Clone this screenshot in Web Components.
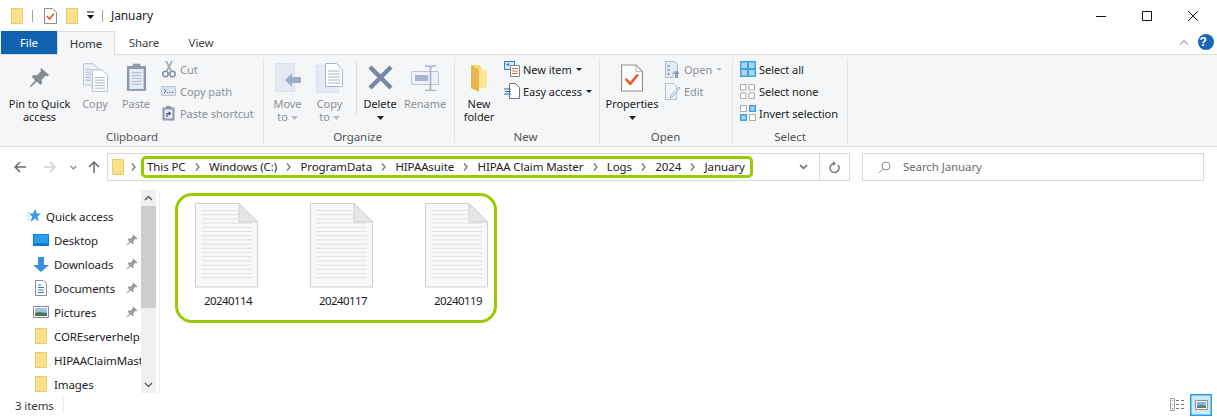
<!DOCTYPE html>
<html lang="en">
<head>
<meta charset="UTF-8">
<title>January</title>
<style>
  html, body { margin: 0; padding: 0; background: #fff; }
  body { width: 1217px; height: 417px; overflow: hidden; font: 11.5px "Noto Sans", "Liberation Sans", sans-serif; letter-spacing: -0.1px; color: #1e1e1e; }
  explorer-window { width: 1217px; height: 417px; }
</style>
</head>
<body>

<explorer-window>
  <title-bar slot="top" heading="January"></title-bar>
  <ribbon-tabs slot="top"></ribbon-tabs>
  <ribbon-bar slot="top">
    <ribbon-group label="Clipboard" width="263">
      <big-button width="71" icon="pin" text="Pin to Quick|access"></big-button>
      <big-button width="40" icon="copy" text="Copy" off></big-button>
      <big-button width="42" icon="paste" text="Paste" off></big-button>
      <small-column>
        <small-button icon="cut" off>Cut</small-button>
        <small-button icon="path" off>Copy path</small-button>
        <small-button icon="shortcut" off>Paste shortcut</small-button>
      </small-column>
    </ribbon-group>
    <ribbon-group label="Organize" width="191" nudge="4">
      <big-button width="41" icon="move" text="Move|to" caret="inline" off></big-button>
      <big-button width="43" icon="copyto" text="Copy|to" caret="inline" off></big-button>
      <ribbon-rule></ribbon-rule>
      <big-button width="44" icon="delete" text="Delete" caret="below"></big-button>
      <big-button width="46" icon="rename" text="Rename" off></big-button>
    </ribbon-group>
    <ribbon-group label="New" width="145" nudge="4">
      <big-button width="42" icon="newfolder" text="New|folder"></big-button>
      <small-column>
        <small-button icon="newitem" caret>New item</small-button>
        <small-button icon="easy" caret>Easy access</small-button>
      </small-column>
    </ribbon-group>
    <ribbon-group label="Open" width="133" nudge="2">
      <big-button width="58" icon="props" text="Properties" caret="below"></big-button>
      <small-column>
        <small-button icon="open" caret off>Open</small-button>
        <small-button icon="edit" off>Edit</small-button>
      </small-column>
    </ribbon-group>
    <ribbon-group label="Select" width="115">
      <small-column>
        <small-button icon="all">Select all</small-button>
        <small-button icon="none">Select none</small-button>
        <small-button icon="invert">Invert selection</small-button>
      </small-column>
    </ribbon-group>
  </ribbon-bar>
  <address-row slot="top"></address-row>

  <nav-pane slot="nav">
    <nav-item icon="star" head>Quick access</nav-item>
    <nav-item icon="desktop" pinned>Desktop</nav-item>
    <nav-item icon="downloads" pinned>Downloads</nav-item>
    <nav-item icon="documents" pinned>Documents</nav-item>
    <nav-item icon="pictures" pinned>Pictures</nav-item>
    <nav-item icon="folder">COREserverhelp</nav-item>
    <nav-item icon="folder">HIPAAClaimMaster</nav-item>
    <nav-item icon="folder">Images</nav-item>
  </nav-pane>

  <file-list slot="main">
    <file-item>20240114</file-item>
    <file-item>20240117</file-item>
    <file-item>20240119</file-item>
  </file-list>

  <status-bar slot="bottom">3 items</status-bar>
</explorer-window>

<script>
// all the little pictures, keyed by name: viewbox w, h, body, then the drawn size if it differs
const FOLDER = '<path d="M.5.5h11v15H.5z" fill="#fde08c" stroke="#eccb6b"/><path d="M9 12.5h2.5v3H9z" fill="#fff2bd" stroke="#eccb6b"/>';
const ICONS = {
  folder: [12, 16, FOLDER],
  check: [13, 16, '<path d="M.5.5h8l4 4v11H.5z" fill="#fff" stroke="#8c8c8c"/><path d="M3 8l2.500 3L10 5.500" fill="none" stroke="#e8562a" stroke-width="1.600"/>'],
  pin: [24, 24, '<path d="M14 1l9 8-2 1.500-2-.5-4.500 4.500.5 4-2 2-4-4L2 23l-1-1 6-7-4-4 2-2 4 .5L13.500 5 13 3z" fill="#858c93"/>', 21, 21],
  copy: [28, 32, '<path d="M.5.500h11l5 5v19H.5z" fill="#edf1f7" stroke="#b3bccb"/><path d="M10.500 7.500h11l6 6v18h-17z" fill="#fff" stroke="#a9b4c6"/><path d="M13 16h12M13 19h12M13 22h12M13 25h12M13 28h12M3 7h6M3 10h6M3 13h6M3 16h6M3 19h6" stroke="#a3b2c9"/>', 25, 29],
  paste: [22, 30, '<path d="M1 3h20v26H1z" fill="#8c98ab"/><path d="M3.500 6h15v21h-15z" fill="#e6ecf6"/><path d="M6 10h10M6 13h10M6 16h10M6 19h10M6 22h10" stroke="#aab8ce"/><path d="M7 3V.500h8V3l2 1v2H5V4z" fill="#8d99ac"/>', 21, 29],
  cut: [14, 18, '<circle cx="3.500" cy="14" r="2.700" fill="none" stroke="#7e8ea5" stroke-width="1.500"/><circle cx="10.500" cy="14" r="2.700" fill="none" stroke="#7e8ea5" stroke-width="1.500"/><path d="M4.500 11.500L10 1M9.500 11.500L4 1" stroke="#a4adb9" stroke-width="1.700"/>'],
  path: [15, 10, '<path d="M.5.500h14v9H.5z" fill="#dbe3f0" stroke="#bcc7d9"/><path d="M3 3l2 2-2 2M6 6.500h1.200M8.500 6.500h1.200M11 6.500h1.200" fill="none" stroke="#5f6f86"/>'],
  shortcut: [13, 16, '<path d="M.5 2.500h12v13H.5z" fill="#8c98ab"/><path d="M2.500 4.500h8v9h-8z" fill="#e4ebf5"/><path d="M4 1h5v2H4z" fill="#8c98ab"/><path d="M5 12V8.500h3M6.500 7l2 1.500-2 1.500" fill="none" stroke="#4c5a70" stroke-width="1.200"/>'],
  move: [26, 29, '<path d="M0 0h20v29H0z" fill="#d8e2f1"/><path d="M1 1h18v27H1z" fill="#e3eaf5"/><path d="M10 17l7-7v4h9v6h-9v4z" fill="#9daec7"/>'],
  copyto: [28, 30, '<path d="M0 2h23v28H0z" fill="#d8e2f1"/><path d="M1 3h21v26H1z" fill="#e3eaf5"/><path d="M9.500.500h11l6 6v17h-17z" fill="#fff" stroke="#a9b4c6"/><path d="M12 8h12M12 11h12M12 14h12M12 17h12M12 20h12" stroke="#a3b2c9"/>'],
  delete: [27, 27, '<path d="M3 3l21 21M24 3L3 24" stroke="#7588a5" stroke-width="4.500"/>'],
  rename: [28, 26, '<path d="M.5 6.500h27v13H.5z" fill="#eef2f8" stroke="#bac6d8"/><path d="M4 10h13v6H4z" fill="#a6b5cd"/><path d="M14 1h4l1.500 1.500V24L18 25.500h-4M25 1h-4l-1.500 1.500M25 25.500h-4L19.500 24" fill="none" stroke="#a2b1c8" stroke-width="1.600"/>'],
  newfolder: [18, 28, '<path d="M1 1h9l7 16v6l-16 2z" fill="#fbd774"/><path d="M1 1l8 5v22l-8-4z" fill="#e8b84e"/><path d="M9 6h8v17H9z" fill="#ffe595"/>'],
  newitem: [16, 16, '<path d="M.5.500h10v8H.5z" fill="#dce7f5" stroke="#3a7ab8"/><path d="M2.500 2.500h3v2h-3z" fill="#3a7ab8"/><path d="M6.500 4.500h9v11h-9z" fill="#fff" stroke="#7b8794"/><path d="M8 7.500h6M8 10h6M8 12.500h6" stroke="#d9755d"/>'],
  easy: [16, 16, '<path d="M5.500.500h6l4 4v11h-10z" fill="#fff" stroke="#6d7680"/><path d="M0 6h7M1 8.500h6M0 11h7" stroke="#1f6fb8"/>'],
  props: [26, 32, '<path d="M.7.700h17l7.600 7.600v23H.7z" fill="#fff" stroke="#8e8e8e" stroke-width="1.300"/><path d="M17.500 1v7.500H25" fill="none" stroke="#a5a5a5"/><path d="M5.500 17l5.500 6 9-11" fill="none" stroke="#ec5a26" stroke-width="3"/>', 22, 28],
  open: [15, 17, '<path d="M.5.500h9l3 3V11H8v5.500H.5z" fill="#e4ebf5" stroke="#adb9cb"/><path d="M2.500 4h2v2h-2zM2.500 8h2v2h-2zM2.500 12h2v2h-2z" fill="#8d9cb3"/><path d="M8 13l3.500-3.500L15 13h-2v4h-3v-4z" fill="#8d9cb3"/>'],
  edit: [15, 17, '<path d="M.5.500h8l3 3v13H.5z" fill="#f0f4fa" stroke="#b6c1d2"/><path d="M14 4l1 1-7 8.500-3 1.500 1-3z" fill="#dfe7f2" stroke="#aebace"/>'],
  all: [16, 16, '<path d="M0 0h16v16H0z" fill="#3fa3e3"/><path d="M1.500 1.500h5.500v5.500H1.500zM9 1.500h5.500v5.500H9zM1.500 9h5.500v5.500H1.500zM9 9h5.500v5.500H9z" fill="#a9d6f3"/>'],
  none: [15, 15, '<path d="M.5.500h5.500v5.500H.5zM9 .5h5.500v5.500H9zM.5 9h5.500v5.500H.5zM9 9h5.500v5.500H9z" fill="#fff" stroke="#a9a9a9"/>'],
  invert: [16, 16, '<path d="M.5.500h6v6h-6zM9.500 9.500h6v6h-6z" fill="#fff" stroke="#a9a9a9"/><path d="M9 0h7v7H9zM0 9h7v7H0z" fill="#3fa3e3"/><path d="M10.500 1.500h4v4h-4zM1.500 10.500h4v4h-4z" fill="#a9d6f3"/>'],
  star: [14, 14, '<path d="M8.500 0l1.300 4.500H14l-3.500 3 1.300 5-3.800-3-4.500 3.500 1.700-5.500L2 4.800h3.500z" fill="#3a9be0"/><path d="M0 4h4M0 7h3M0 10h3" stroke="#a8d4f2"/>'],
  desktop: [16, 12, '<path d="M0 0h16v12H0z" fill="#0f7fd8"/><path d="M1 1h14v9H1z" fill="#2a9df0"/><path d="M2 10h12" stroke="#0b63aa"/>'],
  downloads: [16, 15, '<path d="M5 0h6v8h5l-8 7-8-7h5z" fill="#3a8ee0"/>'],
  documents: [12, 16, '<path d="M.5.500h8l3 3v12H.5z" fill="#fff" stroke="#8a8f96"/><path d="M3 5h3M3 7.500h6M3 10h6M3 12.500h6" stroke="#3a78b5"/>'],
  pictures: [16, 12, '<path d="M.5.500h15v11H.5z" fill="#fff" stroke="#8b8b8b"/><path d="M2 2h12v5H2z" fill="#9cc4e8"/><path d="M2 7l4-1 8 1v3H2z" fill="#50764f"/>']
};
function svgIcon(name) {
  const [w, h, body, dw, dh] = ICONS[name];
  return `<svg width="${dw || w}" height="${dh || h}" viewBox="0 0 ${w} ${h}" style="display:block;flex:none">${body}</svg>`;
}
const PIN_SMALL = '<svg width="12" height="12" viewBox="0 0 24 24" style="display:block"><path d="M14 1l9 8-2 1.500-2-.5-4.500 4.500.5 4-2 2-4-4L2 23l-1-1 6-7-4-4 2-2 4 .5L13.500 5 13 3z" fill="#9a9a9a"/></svg>';

class ExplorerWindow extends HTMLElement {
  constructor() {
    super();
    this.attachShadow({ mode: 'open' }).innerHTML = `
      <style>
        :host { display: flex; flex-direction: column; }
        .body { flex: 1; display: flex; min-height: 0; }
      </style>
      <slot name="top"></slot>
      <div class="body"><slot name="nav"></slot><slot name="main"></slot></div>
      <slot name="bottom"></slot>`;
  }
}

class TitleBar extends HTMLElement {
  connectedCallback() {
    this.attachShadow({ mode: 'open' }).innerHTML = `
      <style>
        :host { display: flex; align-items: center; height: 31px; padding-left: 11px; box-sizing: border-box; flex: none; }
        .rule { width: 1px; height: 12px; background: #a0a0a0; }
        .caret { width: 7px; height: 9px; }
        .name { margin-left: 8px; font-size: 12px; color: #222; flex: 1; }
        .ctl { display: flex; padding-right: 1px; }
        .ctl div { width: 46px; height: 31px; display: flex; align-items: center; justify-content: center; }
      </style>
      ${svgIcon('folder')}
      <div class="rule" style="margin-left:9px"></div>
      <div style="margin-left:11px">${svgIcon('check')}</div>
      <div style="margin-left:9px">${svgIcon('folder')}</div>
      <svg class="caret" style="margin-left:9px" viewBox="0 0 7 9"><path d="M0 1h7" stroke="#111"/><path d="M0 4h7L3.500 8z" fill="#111"/></svg>
      <div class="rule" style="margin-left:8px"></div>
      <div class="name">${this.getAttribute('heading')}</div>
      <div class="ctl">
        <div><svg width="10" height="10"><path d="M0 5.500h10" stroke="#111"/></svg></div>
        <div><svg width="10" height="10"><path d="M.5.500h9v9h-9z" fill="none" stroke="#111"/></svg></div>
        <div><svg width="10" height="10"><path d="M0 0l10 10M10 0L0 10" stroke="#111"/></svg></div>
      </div>`;
  }
}

class RibbonTabs extends HTMLElement {
  constructor() {
    super();
    this.attachShadow({ mode: 'open' }).innerHTML = `
      <style>
        :host { display: flex; height: 24px; flex: none; padding-left: 1px; box-sizing: border-box; position: relative; border-bottom: 1px solid #dadbdc; font-size: 11.5px; }
        div { display: flex; align-items: center; justify-content: center; box-sizing: border-box; height: 23px; padding-bottom: 1px; }
        .file { width: 56px; background: #0f62ae; color: #fff; }
        .home { width: 58px; height: 24px; border: 1px solid #dadbdc; border-bottom: 0; background: #f5f6f7; color: #333; }
        .tab { width: 58px; color: #444; }
        .end { flex: 1; justify-content: flex-end; padding-right: 3px; gap: 9px; }
      </style>
      <div class="file">File</div><div class="home">Home</div><div class="tab">Share</div><div class="tab" style="width:56px">View</div>
      <div class="end">
        <svg width="10" height="6"><path d="M1 5.500l4-4 4 4" fill="none" stroke="#b4b4b4" stroke-width="1.400"/></svg>
        <svg width="16" height="16" viewBox="0 0 16 16"><circle cx="8" cy="8" r="8" fill="#1a66b8"/></svg>
      </div>`;
    const q = document.createElement('span');
    q.textContent = '?';
    q.style.cssText = 'position:absolute;right:6px;top:1px;width:16px;text-align:center;color:#fff;font:bold 12px/20px "Liberation Sans",sans-serif';
    this.shadowRoot.appendChild(q);
  }
}

class RibbonBar extends HTMLElement {
  constructor() {
    super();
    this.attachShadow({ mode: 'open' }).innerHTML = `
      <style>:host { display: flex; height: 92px; flex: none; box-sizing: border-box; background: #f5f6f7; border-bottom: 1px solid #dadbdc; padding-left: 1px; font-size: 11px; letter-spacing: -0.05px; }</style>
      <slot></slot>`;
  }
}

class RibbonGroup extends HTMLElement {
  connectedCallback() {
    this.style.width = this.getAttribute('width') + 'px';
    this.attachShadow({ mode: 'open' }).innerHTML = `
      <style>
        :host { display: flex; flex-direction: column; box-sizing: border-box; padding: 1px 0 1px 3px; position: relative; }
        :host::after { content: ""; position: absolute; right: 0; top: 3px; bottom: 3px; width: 1px; background: #e2e3e4; }
        .items { flex: 1; display: flex; min-height: 0; }
        .label { height: 16px; line-height: 16px; text-align: center; color: #555; font-size: 11.5px; margin-left: -3px; padding-right: ${+(this.getAttribute('nudge') || 1)}px; }
      </style>
      <div class="items"><slot></slot></div>
      <div class="label">${this.getAttribute('label')}</div>`;
  }
}

class RibbonRule extends HTMLElement {
  constructor() {
    super();
    this.attachShadow({ mode: 'open' }).innerHTML = `
      <style>:host { display: block; width: 1px; height: 55px; margin: 4px 1px 0 5px; background: #dcdddf; }</style>`;
  }
}

class BigButton extends HTMLElement {
  connectedCallback() {
    const off = this.hasAttribute('off');
    const caret = this.getAttribute('caret');
    const tri = c => `<svg width="7" height="4" viewBox="0 0 7 4" style="display:inline-block;vertical-align:middle"><path d="M0 0h7L3.500 4z" fill="${c}"/></svg>`;
    const lines = this.getAttribute('text').split('|');
    let html = lines.map(l => `<div>${l}</div>`);
    if (caret === 'inline') html[html.length - 1] = `<div>${lines[lines.length - 1]} ${tri('#b8bcc2')}</div>`;
    if (caret === 'below') html.push(`<div style="height:13px">${tri('#222')}</div>`);
    this.attachShadow({ mode: 'open' }).innerHTML = `
      <style>
        :host { display: flex; flex-direction: column; align-items: center; flex: none; box-sizing: border-box; width: ${this.getAttribute('width')}px; color: ${off ? '#8b9097' : '#222'}; }
        .pic { height: 37px; margin-top: 3px; display: flex; align-items: center; justify-content: center; }
        .txt { text-align: center; line-height: 13px; white-space: nowrap; margin-top: 1px; }
      </style>
      <div class="pic">${svgIcon(this.getAttribute('icon'))}</div>
      <div class="txt">${html.join('')}</div>`;
  }
}

class SmallColumn extends HTMLElement {
  constructor() {
    super();
    this.attachShadow({ mode: 'open' }).innerHTML = `
      <style>:host { display: flex; flex-direction: column; padding: 2px 0 0 3px; }</style><slot></slot>`;
  }
}

class SmallButton extends HTMLElement {
  connectedCallback() {
    const off = this.hasAttribute('off');
    const tri = this.hasAttribute('caret')
      ? `<svg width="6" height="3" style="margin-left:4px;flex:none"><path d="M0 0h6L3 3z" fill="${off ? '#b8bcc2' : '#222'}"/></svg>` : '';
    this.attachShadow({ mode: 'open' }).innerHTML = `
      <style>
        :host { display: flex; align-items: center; height: 22px; white-space: nowrap; color: ${off ? '#8b9097' : '#222'}; }
        .pic { width: 17px; margin-right: 3px; display: flex; justify-content: center; }
      </style>
      <div class="pic">${svgIcon(this.getAttribute('icon'))}</div><slot></slot>${tri}`;
  }
}

class AddressRow extends HTMLElement {
  constructor() {
    super();
    const crumbs = ['This PC', 'Windows (C:)', 'ProgramData', 'HIPAAsuite', 'HIPAA Claim Master', 'Logs', '2024', 'January'];
    const chev = '<svg class="chev" width="5" height="8" viewBox="0 0 5 8"><path d="M1 .500L4 4 1 7.500" fill="none" stroke="#777" stroke-width="1.300"/></svg>';
    this.attachShadow({ mode: 'open' }).innerHTML = `
      <style>
        :host { display: flex; align-items: center; height: 43px; flex: none; box-sizing: border-box; padding: 6px 13px 9px 0; }
        .navs { width: 107px; display: flex; align-items: center; flex: none; height: 28px; }
        .box { width: 743px; height: 28px; box-sizing: border-box; border: 1px solid #d9d9d9; display: flex; align-items: center; padding-left: 4px; flex: none; }
        .chev { flex: none; }
        .crumbs { display: flex; align-items: center; gap: 9.200px; height: 22px; box-sizing: border-box; border: 3px solid #9acb00; border-radius: 5px; padding: 0 5px 0 3px; margin-left: 5px; white-space: nowrap; color: #222; }
        .crumbs span, .search span { padding-bottom: 2px; }
        .tail { flex: 1; display: flex; justify-content: flex-end; padding-right: 11px; }
        .refresh { width: 29px; height: 26px; border-left: 1px solid #d9d9d9; display: flex; align-items: center; justify-content: center; flex: none; }
        .search { margin-left: 12px; flex: 1; height: 28px; box-sizing: border-box; border: 1px solid #d9d9d9; display: flex; align-items: center; padding-left: 15px; gap: 12px; color: #6d6d6d; }
      </style>
      <div class="navs">
        <svg style="margin-left:14px" width="12" height="12" viewBox="0 0 12 12"><path d="M6 1L1 6l5 5M1 6h11" fill="none" stroke="#6b6b6b" stroke-width="1.500"/></svg>
        <svg style="margin-left:18px" width="12" height="12" viewBox="0 0 12 12"><path d="M6 1l5 5-5 5M11 6H0" fill="none" stroke="#cfcfcf" stroke-width="1.500"/></svg>
        <svg style="margin-left:14px" width="7" height="5" viewBox="0 0 7 5"><path d="M.5 1l3 3 3-3" fill="none" stroke="#8a8a8a" stroke-width="1.200"/></svg>
        <svg style="margin-left:11px" width="12" height="12" viewBox="0 0 12 12"><path d="M1 6l5-5 5 5M6 1v11" fill="none" stroke="#6b6b6b" stroke-width="1.500"/></svg>
      </div>
      <div class="box">
        ${svgIcon('folder')}
        <span style="width:7px"></span>${chev}
        <div class="crumbs">${crumbs.map(c => `<span>${c}</span>`).join(chev)}</div>
        <div class="tail"><svg width="9" height="6" viewBox="0 0 9 6"><path d="M1 1l3.500 3.500L8 1" fill="none" stroke="#666" stroke-width="1.500"/></svg></div>
        <div class="refresh"><svg width="12" height="13" viewBox="0 0 12 13"><path d="M5 2.500a4.500 4.500 0 1 0 4 1.500" fill="none" stroke="#777" stroke-width="1.500"/><path d="M4 0v5l3-2.500z" fill="#777"/></svg></div>
      </div>
      <div class="search">
        <svg width="13" height="13" viewBox="0 0 13 13"><circle cx="8" cy="5" r="4" fill="none" stroke="#8a8a8a"/><path d="M5 8l-4 4" stroke="#b58a7a"/></svg>
        <span>Search January</span>
      </div>`;
  }
}

class NavPane extends HTMLElement {
  constructor() {
    super();
    this.attachShadow({ mode: 'open' }).innerHTML = `
      <style>
        :host { display: flex; width: 160px; box-sizing: border-box; flex: none; height: 203px; border-right: 1px solid #f0f0f0; padding-right: 3px; }
        .list { width: 141px; flex: none; overflow: hidden; padding-top: 14px; box-sizing: border-box; }
        .bar { width: 15px; flex: none; background: #f0f0f0; display: flex; flex-direction: column; align-items: center; }
        .btn { height: 16px; display: flex; align-items: center; justify-content: center; flex: none; }
        .thumb { height: 102px; width: 15px; background: #cdcdcd; flex: none; }
        .fill { flex: 1; }
      </style>
      <div class="list"><slot></slot></div>
      <div class="bar">
        <div class="btn"><svg width="9" height="6" viewBox="0 0 9 6"><path d="M1 5l3.500-3.500L8 5" fill="none" stroke="#606060" stroke-width="1.500"/></svg></div>
        <div class="thumb"></div>
        <div class="fill"></div>
        <div class="btn"><svg width="9" height="6" viewBox="0 0 9 6"><path d="M1 1l3.500 3.500L8 1" fill="none" stroke="#606060" stroke-width="1.500"/></svg></div>
      </div>`;
  }
}

class NavItem extends HTMLElement {
  connectedCallback() {
    const head = this.hasAttribute('head');
    this.attachShadow({ mode: 'open' }).innerHTML = `
      <style>
        :host { display: flex; align-items: center; height: 24px; white-space: nowrap; position: relative; padding-left: ${head ? 27 : 33}px; color: #222; }
        .pic { width: ${head ? 14 : 16}px; margin-right: 5px; display: flex; justify-content: center; flex: none; }
        .pin { position: absolute; left: 126px; top: 6px; }
      </style>
      <div class="pic">${svgIcon(this.getAttribute('icon'))}</div><slot></slot>
      ${this.hasAttribute('pinned') ? `<div class="pin">${PIN_SMALL}</div>` : ''}`;
  }
}

class FileList extends HTMLElement {
  constructor() {
    super();
    this.attachShadow({ mode: 'open' }).innerHTML = `
      <style>
        :host { display: block; flex: 1; padding: 3px 0 0 15px; }
        .ring { display: flex; gap: 15px; width: 322px; height: 130px; box-sizing: border-box; border: 3px solid #9acb00; border-radius: 17px; padding: 7px 0 0 0; }
      </style>
      <div class="ring"><slot></slot></div>`;
  }
}

class FileItem extends HTMLElement {
  constructor() {
    super();
    let rows = '';
    for (let i = 0; i < 17; i++) {
      const y = 7.5 + i * 4.2;
      rows += `<path d="M6.500 ${y}H${y < 18 ? 43 : 57}" stroke="#e0e0e0"/>`;
    }
    this.attachShadow({ mode: 'open' }).innerHTML = `
      <style>
        :host { display: flex; flex-direction: column; align-items: center; width: 100px; flex: none; color: #222; }
        svg { display: block; margin-right: 3px; }
        .name { margin-top: 5px; line-height: 16px; letter-spacing: -0.55px; }
      </style>
      <svg width="63" height="85" viewBox="0 0 63 85">
        <path d="M.5.500H44L62.500 19v65H.5z" fill="#f8f8f8" stroke="#cfcfcf"/>
        ${rows}
        <path d="M44 .5V19h18.500z" fill="#e6e6e6" stroke="#cfcfcf"/>
      </svg>
      <div class="name"><slot></slot></div>`;
  }
}

class StatusBar extends HTMLElement {
  constructor() {
    super();
    this.attachShadow({ mode: 'open' }).innerHTML = `
      <style>
        :host { display: flex; align-items: center; height: 24px; flex: none; padding-left: 15px; color: #333; position: relative; }
        .rule { position: absolute; left: 63px; top: 4px; width: 1px; height: 16px; background: #ececec; }
        .views { margin-left: auto; margin-right: 5px; display: flex; align-items: center; gap: 6px; }
      </style>
      <slot></slot><div class="rule"></div>
      <div class="views">
        <svg width="14" height="14" viewBox="0 0 14 14"><path d="M.5.500h4v12h-4z" fill="#fff" stroke="#9c9c9c"/><path d="M6 2.500h3M11 2.500h3M6 6.500h3M11 6.500h3M6 10.500h3M11 10.500h3" stroke="#777"/><path d="M2 2h1v1H2z" fill="#5aa06a"/><path d="M2 6h1v1H2z" fill="#4a90d0"/><path d="M2 10h1v1H2z" fill="#d04030"/></svg>
        <svg width="22" height="22" viewBox="0 0 22 22"><path d="M0 0h22v22H0z" fill="#27a0e6"/><path d="M1.500 1.500h19v19h-19z" fill="#cfe8f8"/><path d="M5.500 6.500h12v9h-12z" fill="#fff" stroke="#8f8f8f"/><path d="M7 8h9v4H7z" fill="#7fb0e0"/><path d="M7 12l4-1 5 1v2H7z" fill="#5e8060"/></svg>
      </div>`;
  }
}

customElements.define('explorer-window', ExplorerWindow);
customElements.define('title-bar', TitleBar);
customElements.define('ribbon-tabs', RibbonTabs);
customElements.define('ribbon-bar', RibbonBar);
customElements.define('ribbon-group', RibbonGroup);
customElements.define('ribbon-rule', RibbonRule);
customElements.define('big-button', BigButton);
customElements.define('small-column', SmallColumn);
customElements.define('small-button', SmallButton);
customElements.define('address-row', AddressRow);
customElements.define('nav-pane', NavPane);
customElements.define('nav-item', NavItem);
customElements.define('file-list', FileList);
customElements.define('file-item', FileItem);
customElements.define('status-bar', StatusBar);
</script>
</body>
</html>
